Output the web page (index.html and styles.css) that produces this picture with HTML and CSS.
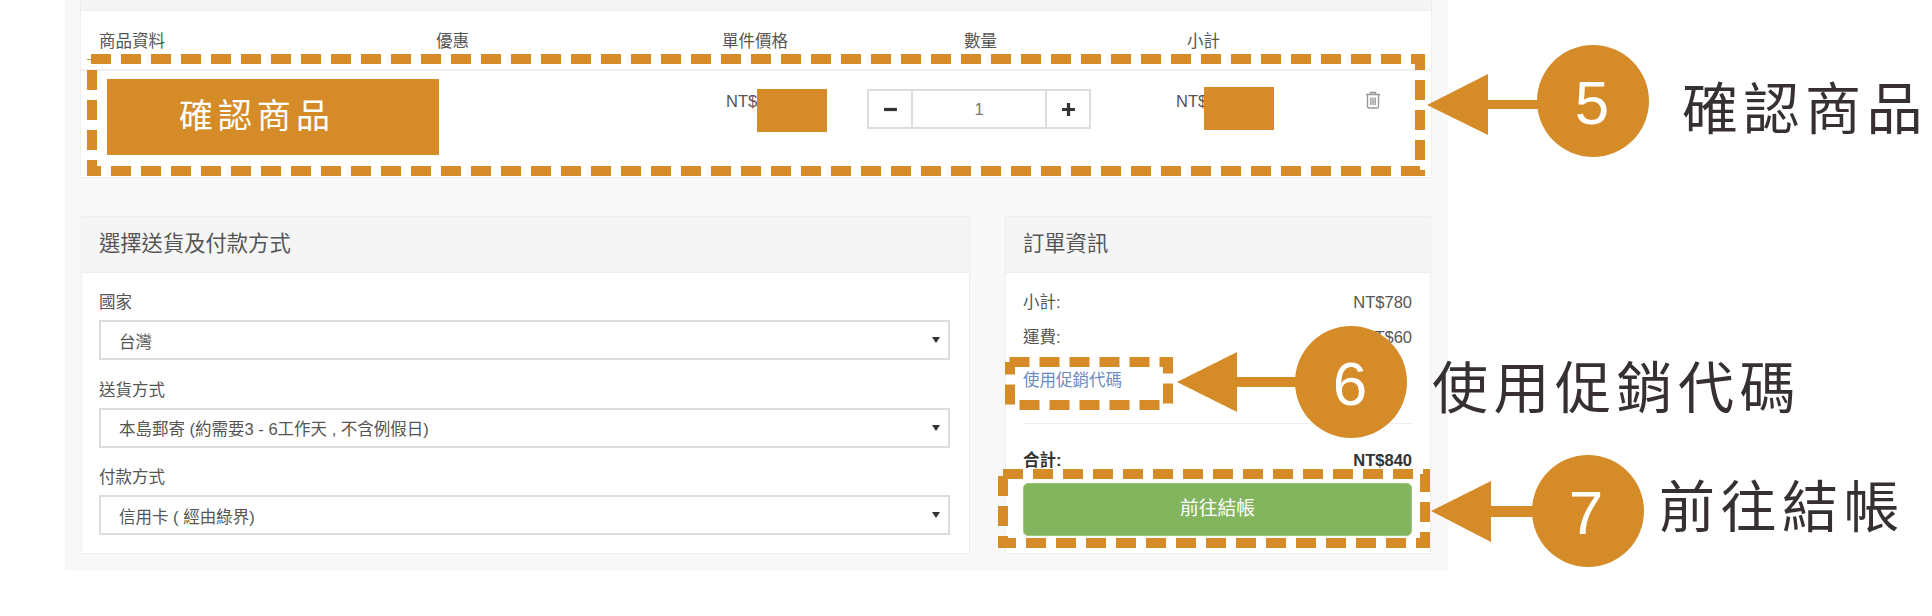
FILE: index.html
```html
<!DOCTYPE html>
<html lang="zh-Hant">
<head>
<meta charset="utf-8">
<title>購物車</title>
<link rel="stylesheet" href="styles.css">
</head>
<body>
<main class="page">
  <section class="cart card">
    <div class="cart-strip"></div>
    <div class="cart-head">
      <span class="col-info">商品資料</span>
      <span class="col-promo">優惠</span>
      <span class="col-price">單件價格</span>
      <span class="col-qty">數量</span>
      <span class="col-sub">小計</span>
    </div>
    <div class="cart-row">
      <div class="product-mask">確認商品</div>
      <div class="price"><span class="price-text">NT$</span><span class="mask"></span></div>
      <div class="stepper">
        <span class="step-btn">
          <svg class="step-icon" viewBox="0 0 14 14"><rect x="1" y="5.5" width="12" height="3"/></svg>
        </span>
        <span class="step-value">1</span>
        <span class="step-btn">
          <svg class="step-icon" viewBox="0 0 14 14"><path d="M5.5 1h3v4.500H13v3H8.500V13h-3V8.500H1v-3h4.500z"/></svg>
        </span>
      </div>
      <div class="subtotal"><span class="subtotal-text">NT$</span><span class="mask"></span></div>
      <svg class="trash" viewBox="0 0 16 18">
        <path d="M1 3.500h14M5.500 3.200V1.500h5v1.700M2.500 3.500v12a1.500 1.500 0 0 0 1.500 1.500h8a1.500 1.500 0 0 0 1.500-1.500v-12M5.800 6.500v7.500M8 6.500v7.500M10.200 6.500v7.500"/>
      </svg>
    </div>
  </section>

  <div class="lower">
    <section class="card shipping">
      <h2 class="card-title">選擇送貨及付款方式</h2>
      <div class="form">
        <div class="field">
          <span class="field-label">國家</span>
          <div class="select"><span class="select-text">台灣</span><i class="caret"></i></div>
        </div>
        <div class="field">
          <span class="field-label">送貨方式</span>
          <div class="select"><span class="select-text">本島郵寄 (約需要3 - 6工作天 , 不含例假日)</span><i class="caret"></i></div>
        </div>
        <div class="field">
          <span class="field-label">付款方式</span>
          <div class="select"><span class="select-text">信用卡 ( 經由綠界)</span><i class="caret"></i></div>
        </div>
      </div>
    </section>

    <section class="card summary">
      <h2 class="card-title">訂單資訊</h2>
      <div class="summary-body">
        <div class="line"><span>小計:</span><span>NT$780</span></div>
        <div class="line line-ship"><span>運費:</span><span>NT$60</span></div>
        <a class="promo-link">使用促銷代碼</a>
        <div class="divider"></div>
        <div class="line line-total"><span>合計:</span><span>NT$840</span></div>
        <div class="checkout">前往結帳</div>
      </div>
    </section>
  </div>
</main>

<svg class="annotations" viewBox="0 0 1932 616">
  <path class="dash" d="M91 59H1420V171H92V59"/>
  <path class="dash" d="M1009.500 362H1168V405H1010V362"/>
  <path class="dash" d="M1003 474H1425V543H1003V474"/>

  <path class="solid" d="M1427 105L1488 74V100H1560V109H1488V135Z"/>
  <circle class="solid" cx="1593" cy="101" r="56"/>
  <text class="num" x="1592" y="124">5</text>
  <text class="note" x="1682" y="129">確認商品</text>

  <path class="solid" d="M1177 382L1237 352V377H1310V387H1237V412Z"/>
  <circle class="solid" cx="1351" cy="382" r="56"/>
  <text class="num" x="1350" y="405">6</text>
  <text class="note" x="1432" y="408">使用促銷代碼</text>

  <path class="solid" d="M1431 511L1491 481V506H1550V517H1491V542Z"/>
  <circle class="solid" cx="1588" cy="511" r="56"/>
  <text class="num" x="1586" y="534">7</text>
  <text class="note" x="1659" y="527">前往結帳</text>
</svg>
</body>
</html>
```
FILE: styles.css
```css
* { box-sizing: border-box; }

html, body {
  margin: 0;
  background: #fff;
}

body {
  position: relative;
  width: 1932px;
  height: 616px;
  overflow: hidden;
  font-family: "Liberation Sans", "Noto Sans CJK TC", sans-serif;
  font-size: 16.5px;
  line-height: 24px;
  color: #555;
}

.page {
  width: 1383px;
  height: 571px;
  margin-left: 65px;
  padding: 0 16px 0 15px;
  background: #f8f8f8;
}

.card {
  background: #fff;
  border: 1px solid #eee;
}

/* Cart table */
.cart {
  height: 178px;
  border-top: 0;
}

.cart-strip {
  height: 11px;
  background: #f5f5f5;
  border-bottom: 1px solid #eee;
}

.cart-head {
  display: grid;
  grid-template-columns: 337px 286px 242px 223px 1fr;
  height: 60px;
  padding: 18px 0 0 18px;
  border-bottom: 2px solid #f0f0f0;
}

.cart-row {
  display: flex;
  align-items: flex-start;
  padding-left: 26px;
}

.product-mask {
  width: 332px;
  height: 76px;
  margin-top: 8px;
  margin-right: 287px;
  padding-left: 72px;
  background: #d58b27;
  color: #fff;
  font-family: "Noto Sans CJK TC", sans-serif;
  font-size: 34px;
  line-height: 70px;
  letter-spacing: 5px;
}

.price {
  display: flex;
  margin-top: 18px;
  margin-right: 40px;
}

.price-text {
  width: 31px;
}

.mask {
  width: 70px;
  height: 43px;
  background: #d58b27;
}

.stepper {
  display: flex;
  width: 224px;
  height: 40px;
  margin-top: 18px;
  border: 2px solid #ddd;
}

.step-btn {
  display: flex;
  flex: 0 0 42px;
  align-items: center;
  justify-content: center;
}

.step-icon {
  width: 15px;
  height: 15px;
  fill: #333;
}

.step-value {
  flex: 1;
  border-left: 2px solid #ddd;
  border-right: 2px solid #ddd;
  line-height: 36px;
  text-align: center;
  color: #777;
}

.subtotal {
  display: flex;
  margin-top: 16px;
  margin-left: 85px;
  line-height: 28px;
}

.subtotal-text {
  width: 28px;
}

.trash {
  width: 16px;
  height: 18px;
  margin-top: 20px;
  margin-left: 91px;
  fill: none;
  stroke: #999;
  stroke-width: 1.4;
}

/* Lower panels */
.lower {
  display: flex;
  gap: 35px;
  margin-top: 38px;
  padding-left: 1px;
}

.shipping {
  width: 889px;
  height: 338px;
}

.summary {
  width: 426px;
  height: 338px;
}

.card-title {
  height: 56px;
  margin: 0;
  padding-left: 17px;
  background: #f5f5f5;
  border-bottom: 1px solid #eee;
  font-size: 21.3px;
  font-weight: 400;
  line-height: 54px;
}

.form {
  display: flex;
  flex-direction: column;
  gap: 17.5px;
  padding: 17px 19px 0 17px;
}

.field-label {
  display: block;
  margin-bottom: 6px;
}

.select {
  display: flex;
  align-items: center;
  justify-content: space-between;
  height: 40px;
  padding: 0 8px 0 18px;
  border: 2px solid #ddd;
}

.select-text {
  padding-top: 3px;
}

.caret {
  width: 0;
  height: 0;
  border-left: 4px solid transparent;
  border-right: 4px solid transparent;
  border-top: 6px solid #333;
}

.summary-body {
  display: flex;
  flex-direction: column;
  padding: 17px 18px 0 17px;
}

.line {
  display: flex;
  justify-content: space-between;
}

.line-ship {
  margin-top: 11px;
}

.promo-link {
  margin-top: 19px;
  color: #6b8cc0;
}

.divider {
  height: 1px;
  margin-top: 31px;
  background: #eee;
}

.line-total {
  margin-top: 24px;
  font-weight: 700;
  color: #333;
}

.checkout {
  height: 53px;
  margin-top: 11px;
  background: #83b55f;
  border: 1px solid #9cc77e;
  border-radius: 5px;
  color: #fff;
  font-size: 18.8px;
  line-height: 50px;
  text-align: center;
}

/* Callouts drawn over the page */
.annotations {
  position: absolute;
  top: 0;
  left: 0;
  width: 1932px;
  height: 616px;
  font-family: "Noto Sans CJK TC", sans-serif;
}

.dash {
  fill: none;
  stroke: #d58b27;
  stroke-width: 10;
  stroke-dasharray: 20 10;
}

.solid {
  fill: #d58b27;
}

.num {
  fill: #fff;
  font-family: "Liberation Sans", sans-serif;
  font-size: 62px;
  text-anchor: middle;
}

.note {
  fill: #373030;
  font-size: 56px;
  letter-spacing: 5.5px;
}
```
